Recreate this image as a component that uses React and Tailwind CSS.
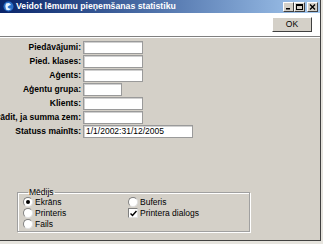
import React from "react";

const rows = [
  { label: "Piedāvājumi:", w: "w-[60px]" },
  { label: "Pied. klases:", w: "w-[60px]" },
  { label: "Aģents:", w: "w-[60px]" },
  { label: "Aģentu grupa:", w: "w-[39px]" },
  { label: "Klients:", w: "w-[60px]" },
  { label: "Atrādit, ja summa zem:", w: "w-[60px]" },
  { label: "Statuss mainīts:", w: "w-[110px]", value: "1/1/2002:31/12/2005" },
];

function CtrlButton({ children }) {
  return (
    <div className="w-[11px] h-[10px] bg-[#d4d0c8] border-t border-l border-white border-r border-b border-r-[#404040] border-b-[#404040] flex items-center justify-center">
      {children}
    </div>
  );
}

function Radio({ checked, label }) {
  return (
    <div className="flex items-center h-[11px] gap-[2px]">
      <div className="w-[10px] h-[10px] rounded-full bg-white border border-[#808080] border-r-[#e0e0e0] border-b-[#e0e0e0] flex items-center justify-center">
        {checked && <div className="w-[4px] h-[4px] rounded-full bg-black" />}
      </div>
      <span className="text-[8.5px] leading-none">{label}</span>
    </div>
  );
}

function Check({ checked, label }) {
  return (
    <div className="flex items-center h-[11px] gap-[2px]">
      <div className="w-[10px] h-[10px] bg-white border border-[#808080] border-r-[#e0e0e0] border-b-[#e0e0e0] flex items-center justify-center">
        {checked && (
          <svg width="7" height="7" viewBox="0 0 7 7">
            <path d="M0.5 3.5 L2.5 5.5 L6.5 1" stroke="#000" strokeWidth="1.5" fill="none" />
          </svg>
        )}
      </div>
      <span className="text-[8.5px] leading-none">{label}</span>
    </div>
  );
}

export default function App() {
  return (
    <div className="w-[323px] h-[244px] bg-[#e6e4de] font-['Liberation_Sans',Arial,sans-serif] text-black">
      <div className="w-[321px] h-[241px] flex flex-col bg-[#d4d0c8] border-r border-b border-[#404040]">
        {/* title bar */}
        <div className="h-[13px] flex items-center bg-gradient-to-r from-[#0a246a] to-[#a6caf0] pl-[3px] pr-[2px]">
          <svg width="11" height="11" viewBox="0 0 11 11">
            <circle cx="5.5" cy="5.5" r="5" fill="#2a6fc9" />
            <path d="M3 2.5 Q7 1 8 4 Q6 4 4.5 6 Q6 8.5 8.5 7.5 Q6 10.5 3 8.5 Q1.5 5 3 2.5Z" fill="#e8f2ff" />
          </svg>
          <span className="ml-[2px] text-white font-bold text-[8.7px] leading-none">
            Veidot lēmumu pieņemšanas statistiku
          </span>
          <div className="flex-1" />
          <div className="flex">
            <CtrlButton>
              <svg width="7" height="6" viewBox="0 0 7 6">
                <rect x="1" y="4" width="4" height="1.5" fill="#000" />
              </svg>
            </CtrlButton>
            <CtrlButton>
              <svg width="7" height="6" viewBox="0 0 7 6">
                <rect x="0.5" y="0.5" width="6" height="5" fill="none" stroke="#000" strokeWidth="1" />
                <rect x="0.5" y="0.5" width="6" height="1.5" fill="#000" />
              </svg>
            </CtrlButton>
            <div className="w-[2px]" />
            <CtrlButton>
              <svg width="7" height="6" viewBox="0 0 7 6">
                <path d="M1 0.5 L6 5.5 M6 0.5 L1 5.5" stroke="#000" strokeWidth="1.4" />
              </svg>
            </CtrlButton>
          </div>
        </div>

        {/* toolbar */}
        <div className="h-[24px] bg-white flex items-center justify-end pr-[8px] border-b border-[#808080]">
          <div className="w-[40px] h-[15px] bg-[#d4d0c8] border border-white border-r-[#404040] border-b-[#404040] flex items-center justify-center text-[8.5px]">
            OK
          </div>
        </div>
        <div className="h-px bg-white" />

        {/* form */}
        <div className="flex flex-col gap-px pt-[3px]">
          {rows.map((r) => (
            <div key={r.label} className="flex items-center h-[13px]">
              <div className="w-[81px] flex justify-end overflow-hidden">
                <span className="shrink-0 whitespace-nowrap font-bold text-[8.5px] leading-none">
                  {r.label}
                </span>
              </div>
              <div
                className={`${r.w} ml-[2px] h-[13px] bg-white border border-[#9a9a9a] shadow-[inset_1px_1px_0_#d0d0d0] text-[8.5px] leading-[11px] pl-[2px] whitespace-nowrap overflow-hidden`}
              >
                {r.value || ""}
              </div>
            </div>
          ))}
        </div>

        {/* group box */}
        <fieldset className="ml-[17px] mt-[50px] w-[233px] h-[44px] border border-[#a0a0a0] shadow-[inset_1px_1px_0_#fff,1px_1px_0_#fff] px-[5px]">
          <legend className="ml-[5px] px-[1px] text-[8.5px] leading-none">Mēdijs</legend>
          <div className="flex">
            <div className="flex flex-col w-[105px]">
              <Radio checked label="Ekrāns" />
              <Radio label="Printeris" />
              <Radio label="Fails" />
            </div>
            <div className="flex flex-col">
              <Radio label="Buferis" />
              <Check checked label="Printera dialogs" />
            </div>
          </div>
        </fieldset>
      </div>
    </div>
  );
}
